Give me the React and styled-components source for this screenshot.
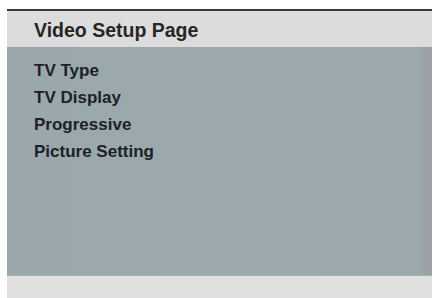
import styled, { createGlobalStyle } from "styled-components";

const GlobalStyle = createGlobalStyle`
  html, body {
    margin: 0;
    padding: 0;
    background: #ffffff;
  }
  body {
    font-family: "Liberation Sans", Arial, sans-serif;
  }
`;

const Screen = styled.div`
  width: 425px;
  height: 289px;
  margin: 9px 0 0 7px;
  display: flex;
  flex-direction: column;
  border-top: 2px solid #3a3a3a;
`;

const Header = styled.div`
  height: 34px;
  padding: 2px 0 0 27px;
  background: #dcdcdc;
  color: #262626;
  font-size: 19.5px;
  font-weight: bold;
  line-height: 34px;
`;

const Panel = styled.div`
  height: 218px;
  padding: 10px 0 0 27px;
  background: linear-gradient(to right, #9aa8ac 0, #9ca9ad 97%, #99a3a6 98%, #9aa2a4 100%);
  border-bottom: 1px solid #a9b0b1;
  display: flex;
  flex-direction: column;
`;

const Item = styled.div`
  color: #1c2129;
  font-size: 17px;
  font-weight: bold;
  line-height: 27px;
`;

const Footer = styled.div`
  flex: 1;
  background: #dfe0df;
`;

const items = ["TV Type", "TV Display", "Progressive", "Picture Setting"];

export default function App() {
  return (
    <>
      <GlobalStyle />
      <Screen>
        <Header>Video Setup Page</Header>
        <Panel>
          {items.map((t) => (
            <Item key={t}>{t}</Item>
          ))}
        </Panel>
        <Footer />
      </Screen>
    </>
  );
}
